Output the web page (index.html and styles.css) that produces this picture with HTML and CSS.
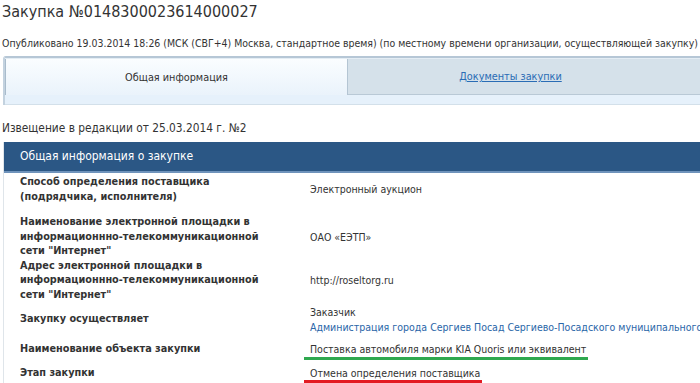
FILE: index.html
```html
<!DOCTYPE html>
<html lang="ru">
<head>
<meta charset="utf-8">
<link rel="stylesheet" href="styles.css">
</head>
<body>
<div class="page">
  <h1 class="title">Закупка №0148300023614000027</h1>
  <p class="published">Опубликовано 19.03.2014 18:26 (МСК (СВГ+4) Москва, стандартное время) (по местному времени организации, осуществляющей закупку)</p>
  <div class="tabs">
    <div class="tab-row">
      <div class="tab active">Общая информация</div>
      <div class="tab other"><a href="#">Документы закупки</a></div>
    </div>
    <div class="tab-strip"></div>
  </div>
  <p class="notice">Извещение в редакции от 25.03.2014 г. №2</p>
  <div class="section">
    <div class="section-head">Общая информация о закупке</div>
    <div class="rows">
      <div class="row r1">
        <div class="label">Способ определения поставщика<br>(подрядчика, исполнителя)</div>
        <div class="value">Электронный аукцион</div>
      </div>
      <div class="row r2">
        <div class="label">Наименование электронной площадки в<br>информационнно-телекоммуникационной<br>сети "Интернет"</div>
        <div class="value">ОАО «ЕЭТП»</div>
      </div>
      <div class="row r3">
        <div class="label">Адрес электронной площадки в<br>информационнно-телекоммуникационной<br>сети "Интернет"</div>
        <div class="value">http://roseltorg.ru</div>
      </div>
      <div class="row r4">
        <div class="label">Закупку осуществляет</div>
        <div class="value">Заказчик<br><a href="#" class="org">Администрация города Сергиев Посад Сергиево-Посадского муниципального района</a></div>
      </div>
      <div class="row r5">
        <div class="label">Наименование объекта закупки</div>
        <div class="value"><span class="mark green">Поставка автомобиля марки KIA Quoris или эквивалент</span></div>
      </div>
      <div class="row r6">
        <div class="label">Этап закупки</div>
        <div class="value"><span class="mark red">Отмена определения поставщика</span></div>
      </div>
    </div>
  </div>
</div>
</body>
</html>
```
FILE: styles.css
```css
html, body {
  margin: 0;
  padding: 0;
  background: #fff;
  overflow: hidden;
}
.page {
  width: 700px;
  height: 383px;
  overflow: hidden;
  font-family: "DejaVu Sans", Verdana, sans-serif;
  font-stretch: condensed;
  color: #333;
}
.title {
  margin: 0;
  padding: 2px 0 0 2px;
  height: 24px;
  font-size: 16px;
  font-weight: normal;
  line-height: 20px;
  color: #333;
}
.published {
  margin: 0;
  padding: 10px 0 0 2px;
  height: 20px;
  font-size: 10.45px;
  line-height: 14px;
  white-space: nowrap;
}
.tabs {
  margin-left: 3px;
  border-top: 2px solid #b6c7d6;
  border-left: 2px solid #c3d2df;
  border-radius: 3px 0 0 0;
}
.tab-row {
  display: flex;
  height: 36px;
  border-top: 1px solid #e4edf4;
}
.tab {
  flex: 1;
  display: flex;
  align-items: center;
  justify-content: center;
  font-size: 10.8px;
  background: #d5e1ea;
  border-bottom: 1px solid #b9c9d6;
}
.tab.other {
  padding-right: 27px;
}
.tab.active {
  flex: 0 0 341px;
  background: linear-gradient(#fafdff, #eaf3fb);
  border-left: 1px solid #a9bccc;
  border-right: 1px solid #b4c5d3;
  border-bottom: none;
}
.tab a {
  color: #2a6cb5;
  text-decoration: underline;
}
.tab-strip {
  height: 9px;
  background: #e6f1fb;
  border-bottom: 1px solid #d3e0ea;
}
.notice {
  margin: 0;
  padding: 15px 0 0 2px;
  height: 22px;
  font-size: 11.8px;
  line-height: 16px;
}
.section {
  margin-left: 3px;
  border-left: 1px solid #dfe5ea;
}
.section-head {
  height: 29px;
  padding-left: 16px;
  background: #2b5785;
  border-bottom: 2px solid #6f93bb;
  color: #fff;
  font-size: 12px;
  line-height: 29px;
}
.row {
  display: grid;
  grid-template-columns: 306px 1fr;
  align-items: center;
  font-size: 10.5px;
  line-height: 14.5px;
}
.label {
  padding-left: 16px;
  font-size: 10.8px;
  font-weight: bold;
}
.value {
  white-space: nowrap;
}
.r1 { padding: 2px 0 8px 0; }
.r2 { padding: 3px 0 0 0; }
.r3 { padding: 0 0 1px 0; }
.r4 { padding: 2px 0 4px 0; }
.r5 { padding: 4px 0 4px 0; }
.r6 { padding: 5px 0 4px 0; }
.org {
  color: #2a66a8;
  text-decoration: none;
}
.mark {
  display: inline-block;
  vertical-align: top;
  margin-left: -6px;
  margin-bottom: -3px;
  padding: 0 2px 0 6px;
  border-bottom: 3px solid;
  line-height: 14.5px;
}
.mark.green { border-bottom-color: #2fa84f; }
.mark.red { border-bottom-color: #e31b23; }
```
